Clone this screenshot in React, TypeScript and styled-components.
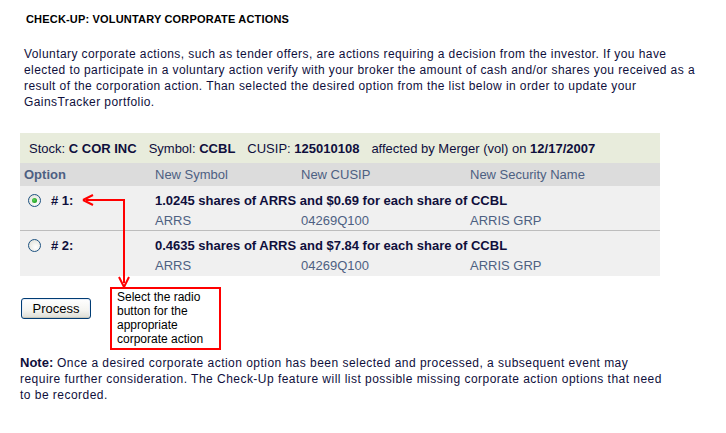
import * as React from 'react';
import styled, { createGlobalStyle } from 'styled-components';

const GlobalStyle = createGlobalStyle`
  body {
    margin: 0;
    background: #ffffff;
    font-family: 'Liberation Sans', Arial, sans-serif;
    color: #0f0f3c;
  }
`;

const Page = styled.div`
  width: 726px;
  padding: 13px 0 0 20px;
  box-sizing: border-box;
`;

const Title = styled.h1`
  margin: 0 0 0 6px;
  font-size: 11px;
  line-height: 13px;
  font-weight: bold;
  color: #000;
  letter-spacing: 0.18px;
`;

const Intro = styled.p`
  margin: 20px 0 0 4px;
  font-size: 12px;
  line-height: 16px;
  letter-spacing: 0.42px;
  white-space: nowrap;
`;

const Section = styled.div`
  position: relative;
  margin-top: 23px;
`;

const Table = styled.div`
  width: 640px;
  font-size: 13px;
`;

const StockBar = styled.div`
  height: 30px;
  display: flex;
  align-items: center;
  padding-left: 9px;
  background: #e8ecdc;
  color: #0f0f3c;
`;

const StockItem = styled.span`
  margin-right: 12px;
  b {
    font-weight: bold;
  }
`;

const Grid = styled.div`
  display: grid;
  grid-template-columns: 135px 146px 169px 1fr;
  align-items: center;
`;

const HeadRow = styled(Grid)`
  height: 23px;
  background: #dcdcdc;
  color: #4d6082;
`;

const HeadCell = styled.div<{ $bold?: boolean }>`
  padding-left: ${({ $bold }) => ($bold ? '4px' : '0')};
  font-weight: ${({ $bold }) => ($bold ? 'bold' : 'normal')};
`;

const OptionRow = styled(Grid)<{ $last?: boolean }>`
  background: #f0f0f0;
  padding-top: 4px;
  grid-auto-rows: 20px;
  border-bottom: ${({ $last }) => ($last ? 'none' : '1px solid #bdbdbd')};
  padding-bottom: ${({ $last }) => ($last ? '1px' : '0')};
`;

const OptionLabel = styled.label`
  display: flex;
  align-items: center;
  gap: 10px;
  padding-left: 8px;
  font-weight: bold;
  color: #0f0f3c;
`;

const Radio = styled.span<{ $checked?: boolean }>`
  width: 11px;
  height: 11px;
  border-radius: 50%;
  border: 1px solid #1d5281;
  background: radial-gradient(circle at 60% 65%, #ffffff 0%, #e4e4dc 80%, #d4d4cc 100%);
  display: flex;
  align-items: center;
  justify-content: center;
  &::after {
    content: '';
    display: ${({ $checked }) => ($checked ? 'block' : 'none')};
    width: 5px;
    height: 5px;
    border-radius: 50%;
    background: radial-gradient(circle at 40% 40%, #5fd35f 0%, #21a121 70%);
  }
`;

const Description = styled.div`
  grid-column: 2 / span 3;
  font-weight: bold;
  color: #0f0f3c;
`;

const SubCell = styled.div<{ $col: number }>`
  grid-column: ${({ $col }) => $col};
  color: #4d6082;
`;

const ActionRow = styled.div`
  display: flex;
  align-items: flex-start;
  margin-top: 11px;
  gap: 19px;
`;

const ProcessButton = styled.button`
  margin: 11px 0 0 1px;
  width: 70px;
  height: 21px;
  padding: 0;
  border: 1px solid #003c74;
  border-radius: 3px;
  background: linear-gradient(#ffffff, #f4f4f0 60%, #dcdcd4);
  font-family: 'Liberation Sans', Arial, sans-serif;
  font-size: 13px;
  color: #000;
  box-shadow: inset 0 -1px 0 #c9c7ba, inset 0 0 0 1px #e8eef8;
`;

const Callout = styled.div`
  width: 102px;
  border: 2px solid #ff0000;
  padding: 1px 0 2px 5px;
  font-size: 12px;
  line-height: 14px;
  color: #000;
`;

const Note = styled.p`
  margin: 5px 0 0 0;
  font-size: 12px;
  line-height: 16px;
  letter-spacing: 0.47px;
  white-space: nowrap;
  b {
    font-size: 13px;
    letter-spacing: 0;
  }
`;

const Arrow = styled.svg`
  position: absolute;
  left: 60px;
  top: 60px;
  overflow: visible;
`;

const options = [
  { id: 1, text: '1.0245 shares of ARRS and $0.69 for each share of CCBL', checked: true },
  { id: 2, text: '0.4635 shares of ARRS and $7.84 for each share of CCBL', checked: false },
];

export default function App() {
  return (
    <Page>
      <GlobalStyle />
      <Title>CHECK-UP: VOLUNTARY CORPORATE ACTIONS</Title>
      <Intro>
        Voluntary corporate actions, such as tender offers, are actions requiring a decision from the investor. If you have
        <br />
        elected to participate in a voluntary action verify with your broker the amount of cash and/or shares you received as a
        <br />
        result of the corporation action. Than selected the desired option from the list below in order to update your
        <br />
        GainsTracker portfolio.
      </Intro>

      <Section>
        <Table>
          <StockBar>
            <StockItem>Stock: <b>C COR INC</b></StockItem>
            <StockItem>Symbol: <b>CCBL</b></StockItem>
            <StockItem>CUSIP: <b>125010108</b></StockItem>
            <StockItem>affected by Merger (vol) on <b>12/17/2007</b></StockItem>
          </StockBar>
          <HeadRow>
            <HeadCell $bold>Option</HeadCell>
            <HeadCell>New Symbol</HeadCell>
            <HeadCell>New CUSIP</HeadCell>
            <HeadCell>New Security Name</HeadCell>
          </HeadRow>
          {options.map((o, i) => (
            <OptionRow key={o.id} $last={i === options.length - 1}>
              <OptionLabel>
                <Radio $checked={o.checked} /># {o.id}:
              </OptionLabel>
              <Description>{o.text}</Description>
              <SubCell $col={2}>ARRS</SubCell>
              <SubCell $col={3}>04269Q100</SubCell>
              <SubCell $col={4}>ARRIS GRP</SubCell>
            </OptionRow>
          ))}
        </Table>

        <ActionRow>
          <ProcessButton>Process</ProcessButton>
          <Callout>
            Select the radio button for the appropriate corporate action
          </Callout>
        </ActionRow>

        <Arrow width="50" height="100">
          <line x1="6" y1="7" x2="44" y2="7" stroke="#ff0000" strokeWidth="2" />
          <line x1="44" y1="6" x2="44" y2="90" stroke="#ff0000" strokeWidth="2" />
          <path d="M3 7 L13 2 M3 7 L13 12" stroke="#ff0000" strokeWidth="2" fill="none" />
          <path d="M44 94 L39 84 M44 94 L49 84" stroke="#ff0000" strokeWidth="2" fill="none" />
        </Arrow>
      </Section>

      <Note>
        <b>Note:</b> Once a desired corporate action option has been selected and processed, a subsequent event may
        <br />
        require further consideration. The Check-Up feature will list possible missing corporate action options that need
        <br />
        to be recorded.
      </Note>
    </Page>
  );
}
